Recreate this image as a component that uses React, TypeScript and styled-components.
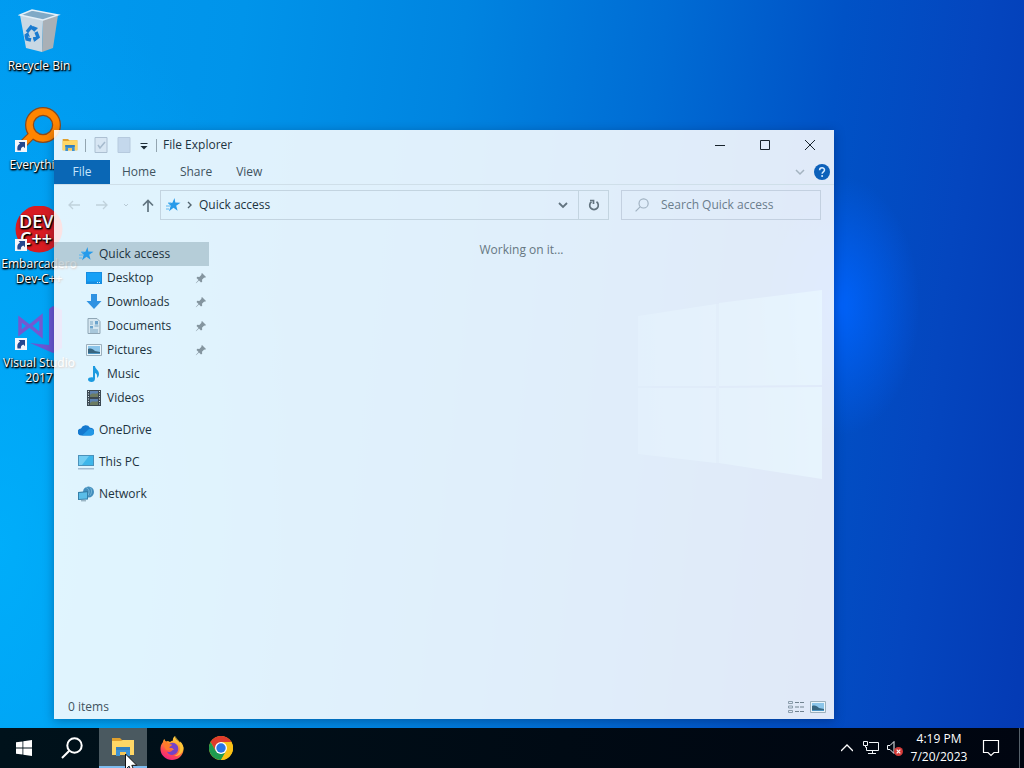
import React from "react";
import styled, { createGlobalStyle, css } from "styled-components";

const GlobalStyle = createGlobalStyle`
  *, *::before, *::after { box-sizing: border-box; }
  body {
    margin: 0;
    font-family: "Open Sans", "Noto Sans", sans-serif;
    font-size: 12px;
    line-height: 16px;
    color: #1d3340;
  }
  button, input { font: inherit; color: inherit; }
  button { border: 0; padding: 0; background: none; }
  svg { display: block; flex: none; }
  ul { list-style: none; margin: 0; padding: 0; }
`;

/* ---------- Desktop ---------- */

const Screen = styled.div`
  display: flex;
  flex-direction: column;
  min-height: 100vh;
  overflow: hidden;
`;

const Desktop = styled.main`
  position: relative;
  flex: 1;
  background:
    radial-gradient(ellipse 80px 130px at 82% 42%, rgba(0, 100, 255, 0.9), rgba(0, 100, 255, 0) 100%),
    radial-gradient(ellipse 30% 80% at 0% 75%, rgba(0, 182, 255, 0.7), rgba(0, 182, 255, 0) 100%),
    linear-gradient(97deg, #009af0 0%, #0094ea 22%, #0084e0 42%, #006cd4 60%, #0052c6 76%, #0446bf 88%, #043ab4 100%);
`;

const Wallpaper = styled.svg`
  position: absolute;
  inset: 0;
  width: 100%;
  height: 100%;
`;

const Shortcuts = styled.ul`
  position: relative;
  display: flex;
  flex-direction: column;
  width: 78px;
  padding-top: 8px;
`;

const Shortcut = styled.li`
  height: 99px;
`;

const ShortcutButton = styled.button`
  display: flex;
  flex-direction: column;
  align-items: center;
  gap: 2px;
  width: 100%;
  line-height: 15px;
  color: #fff;
  text-shadow: 0 1px 2px #000, 1px 1px 2px #000, 1px 1px 1px #000;
`;

/* ---------- Explorer window ---------- */

const Window = styled.section`
  position: absolute;
  inset: 130px 190px 9px 54px;
  display: flex;
  flex-direction: column;
  background: rgba(255, 255, 255, 0.88);
  box-shadow: 0 2px 10px rgba(0, 20, 60, 0.35);
`;

const TitleBar = styled.header`
  display: flex;
  align-items: center;
  height: 30px;
  padding: 0 2px 0 8px;
`;

const QuickTools = styled.div`
  display: flex;
  align-items: center;
  gap: 7px;
  margin-right: 6px;
`;

const ToolButton = styled.button`
  display: flex;
`;

const Divider = styled.span`
  width: 1px;
  height: 13px;
  background: #93a5b0;
`;

const WindowTitle = styled.h1`
  flex: 1;
  margin: 0;
  font-size: 12px;
  font-weight: 400;
`;

const CaptionButton = styled.button`
  display: flex;
  align-items: center;
  justify-content: center;
  width: 45px;
  height: 30px;
`;

const Ribbon = styled.nav`
  display: flex;
  align-items: center;
  height: 25px;
  padding-right: 4px;
  border-bottom: 1px solid #cfdfe9;
`;

const Tab = styled.button<{ $file?: boolean }>`
  height: 24px;
  padding: 0 12px;
  color: #40535f;
  ${(p) =>
    p.$file &&
    css`
      width: 56px;
      background: #0a67b5;
      color: #c5e4fa;
    `}
`;

const RibbonEnd = styled.div`
  display: flex;
  align-items: center;
  gap: 8px;
  margin-left: auto;
`;

const AddressRow = styled.div`
  display: flex;
  align-items: center;
  height: 39px;
  padding: 0 13px 0 12px;
`;

const History = styled.div`
  display: flex;
  align-items: center;
  gap: 12px;
  width: 94px;
`;

const AddressBox = styled.div`
  display: flex;
  flex: 1;
  align-items: stretch;
  height: 30px;
  border: 1px solid #c3d4e0;
`;

const Crumb = styled.button`
  display: flex;
  flex: 1;
  align-items: center;
  gap: 5px;
  padding-left: 4px;
`;

const BoxButton = styled.button<{ $divided?: boolean }>`
  display: flex;
  align-items: center;
  justify-content: center;
  width: 30px;
  border-left: ${(p) => (p.$divided ? "1px solid #c3d4e0" : "0")};
`;

const SearchBox = styled.label`
  display: flex;
  align-items: center;
  gap: 12px;
  width: 200px;
  height: 30px;
  margin-left: 12px;
  padding-left: 13px;
  border: 1px solid #c3d0e0;
`;

const SearchInput = styled.input`
  min-width: 0;
  width: 100%;
  padding: 0;
  border: 0;
  outline: 0;
  background: none;
  &::placeholder { color: #6b7d8c; opacity: 1; }
`;

const Body = styled.div`
  display: flex;
  flex: 1;
  padding-top: 18px;
`;

const Tree = styled.nav`
  width: 155px;
`;

const TreeGroup = styled.ul`
  margin-bottom: 8px;
`;

const TreeItem = styled.button<{ $nested?: boolean; $selected?: boolean }>`
  display: flex;
  align-items: center;
  gap: 5px;
  width: 100%;
  height: 24px;
  padding-left: ${(p) => (p.$nested ? 32 : 24)}px;
  background: ${(p) => (p.$selected ? "rgba(90, 125, 140, 0.32)" : "none")};
`;

const Pin = styled.span`
  margin-left: auto;
  padding-right: 2px;
`;

const Content = styled.p`
  flex: 1;
  margin: 0;
  text-align: center;
  color: #667782;
`;

const StatusBar = styled.footer`
  display: flex;
  align-items: center;
  height: 24px;
  padding: 0 8px 0 14px;
  color: #40535f;
`;

const ViewModes = styled.div`
  display: flex;
  align-items: center;
  gap: 6px;
  margin-left: auto;
`;

/* ---------- Taskbar ---------- */

const Taskbar = styled.footer`
  position: relative;
  display: flex;
  height: 40px;
  background: linear-gradient(90deg, #00121b, #000a14 55%, #000510);
  color: #fff;
`;

const TaskGroup = styled.div`
  display: flex;
  gap: 1px;
  margin-left: 3px;
  &:first-child { gap: 0; margin-left: 0; }
`;

const TaskButton = styled.button<{ $active?: boolean }>`
  position: relative;
  display: flex;
  align-items: center;
  justify-content: center;
  width: 48px;
  height: 40px;
  ${(p) =>
    p.$active &&
    css`
      background: #4a5960;
      border-bottom: 2px solid #7dbcf0;
    `}
`;

const Tray = styled.div`
  display: flex;
  align-items: center;
  margin-left: auto;
`;

const TrayButton = styled.button`
  display: flex;
  align-items: center;
  justify-content: center;
  width: 24px;
  height: 40px;
`;

const Clock = styled.button`
  width: 64px;
  height: 40px;
  line-height: 18px;
  text-align: center;
  white-space: nowrap;
`;

const NoticeButton = styled(TrayButton)`
  width: 40px;
`;

const ShowDesktop = styled.button`
  width: 5px;
  height: 40px;
  margin-left: 8px;
  border-left: 1px solid #56616a;
`;

const Pointer = styled.svg`
  position: absolute;
  left: 26px;
  top: 25px;
  z-index: 1;
`;

/* ---------- Drawings ---------- */

const LinkBadge = () => (
  <g>
    <rect x="0" y="33" width="12" height="12" fill="#f4f6fb" />
    <path d="M2.500 43.500c-.6-3.500 0-5.500 2.600-6.800L3.600 35H10v6.300l-1.700-1.700c-2 .8-2.600 1.900-2.400 4z" fill="#24478f" />
  </g>
);

const RecycleBin = () => (
  <svg width="48" height="48" viewBox="0 0 48 48">
    <path d="m5 7 23 5-1 32-16-4z" fill="#c8d8e4" />
    <path d="m28 12 15-5-5 33-11 4z" fill="#a9b0b6" />
    <path d="M5 7 17 2l26 5-15 5z" fill="#7fa9c6" />
    <path d="M5 7 17 2l26 5-15 5z" fill="none" stroke="#e3eff8" strokeWidth="1.400" />
    <g fill="none" stroke="#197bd0" strokeWidth="3.400">
      <path d="m12 24 4-5 4 3" />
      <path d="m21 24 2 5-4 3" />
      <path d="m16 32-4-1-1-4" />
    </g>
    <path d="m18 18 5 2-4 4zM24 29l-5 5-1-5zM9 27l4-3 2 5z" fill="#197bd0" />
  </svg>
);

const EverythingIcon = () => (
  <svg width="48" height="48" viewBox="0 0 48 48">
    <path d="M18 27 5 40" stroke="#8a4a1c" strokeWidth="8.500" />
    <circle cx="28" cy="18" r="13.500" fill="none" stroke="#8a4a1c" strokeWidth="9" />
    <path d="M19 26 5 40" stroke="#ff8500" strokeWidth="6.300" />
    <circle cx="28" cy="18" r="13.500" fill="none" stroke="#ff8500" strokeWidth="6.500" />
    <LinkBadge />
  </svg>
);

const DevCppIcon = () => (
  <svg width="48" height="48" viewBox="0 0 48 48">
    <circle cx="24" cy="23" r="23.500" fill="#d81c22" />
    <text fill="#fff" fontFamily="Open Sans, sans-serif" fontSize="18" fontWeight="600">
      <tspan x="4" y="22">DEV</tspan>
      <tspan x="5" y="39">C++</tspan>
    </text>
    <LinkBadge />
  </svg>
);

const VisualStudioIcon = () => (
  <svg width="48" height="48" viewBox="0 0 48 48">
    <path d="m34 4 4-3 9 4v38l-9 5-23-10 19 2z" fill="#6c55d2" />
    <path d="M5 14v14l9-7zM26 12v18l-11-9z" fill="none" stroke="#7458d0" strokeWidth="3.500" />
    <LinkBadge />
  </svg>
);

const Folder = ({ size }: { size: number }) => (
  <svg width={size} height={size} viewBox="0 0 24 24">
    <path d="M1 3h8l2 2h12v15H1z" fill="#e0a02e" />
    <path d="M1 6h9l2-1h11v15H1z" fill="#ffd766" />
    <path d="M5 21v-9h14v9h-4v-4H9v4z" fill="#3d92d4" />
    <path d="M5 12h14v3H5z" fill="#3580bd" />
    <path d="M9 17h6v3H9z" fill="#f4c658" />
  </svg>
);

const Star = () => (
  <svg width="16" height="16" viewBox="0 0 16 16">
    <path d="m9.500 1 .8 4.600 5.200.2-4.300 2.900 1.400 5-4.100-2.900-4.500 3.500 1.700-5.500L3 6l4.400-.3z" fill="#279bea" />
    <path d="M1 9h4M1 12h3M3 6h3" stroke="#5bb6f0" strokeWidth="1" />
  </svg>
);

const MonitorSmall = () => (
  <svg width="16" height="16" viewBox="0 0 16 16">
    <path d="M0 2h16v12H0z" fill="#168ce0" />
    <path d="M1 3h14v8.500H1z" fill="#16a0f6" />
    <path d="M11 12.500h1M13 12.500h1" stroke="#d8f1ff" />
  </svg>
);

const DownloadArrow = () => (
  <svg width="16" height="16" viewBox="0 0 16 16">
    <path d="M5 0h6v7h4.500L8 15 .5 7H5z" fill="#2f92e2" />
  </svg>
);

const DocumentIcon = () => (
  <svg width="16" height="16" viewBox="0 0 16 16">
    <path d="M2 .5h9l3 3v12H2z" fill="#d5e6f0" stroke="#8fa6b5" />
    <path d="M4 4h3M4 6h3M4 12h8M4 14h8M8.500 8h4" stroke="#7aa8c6" />
    <path d="M4 8h3v2.500H4zM9 3h3v3.500H9z" fill="#6ba3cc" />
  </svg>
);

const PictureIcon = () => (
  <svg width="16" height="16" viewBox="0 0 16 16">
    <path d="M.5 2.500h15v11H.5z" fill="#e9f5fb" stroke="#9cb0bd" />
    <path d="M2 4h12v8H2z" fill="#8bc5ea" />
    <path d="M2 7c3-1 5 0 7 2l5 1v2H2z" fill="#376580" />
    <path d="M2 11h12v1H2z" fill="#4b93c2" />
  </svg>
);

const MusicIcon = () => (
  <svg width="16" height="16" viewBox="0 0 16 16">
    <path d="M7 0h2c0 3 4 4 4 8 0 2-1 3-2 4 .6-3-.5-4.500-2-5v5.500C9 15 7.500 16 5.500 16 3.500 16 2 15 2 13.500S4 11 7 11.400z" fill="#1b9ae0" />
  </svg>
);

const VideoIcon = () => (
  <svg width="16" height="16" viewBox="0 0 16 16">
    <path d="M1 0h14v16H1z" fill="#3b4852" />
    <path d="M4 1h8v6H4zM4 9h8v6H4z" fill="#5d82b0" />
    <path d="M4 5c3-3 5 0 8-2v4H4zM4 13c3-3 5 0 8-2v4H4z" fill="#6d7c62" />
    <path d="M2.500 1v14M13.500 1v14" stroke="#d6e3eb" strokeDasharray="1 1.500" />
  </svg>
);

const CloudIcon = () => (
  <svg width="16" height="16" viewBox="0 0 16 16">
    <path d="M3.500 13.500a3.500 3.500 0 0 1-.5-7 5 5 0 0 1 9-.8 3.900 3.900 0 0 1 .5 7.800z" fill="#1479cf" />
    <path d="m4 13.500 7-6.500c3-1 5 1 5 3.300a3 3 0 0 1-3 3.200z" fill="#2398e6" />
  </svg>
);

const ComputerIcon = () => (
  <svg width="16" height="16" viewBox="0 0 16 16">
    <path d="M0 1h16v11H0z" fill="#4b91ba" />
    <path d="M1 2h14v9H1z" fill="#3fb6ea" />
    <path d="M1 2h10l-7 9H1z" fill="#73cdf3" />
    <path d="M0 14h16v1.500H0z" fill="#a4bcd2" />
  </svg>
);

const NetworkIcon = () => (
  <svg width="16" height="16" viewBox="0 0 16 16">
    <circle cx="10.500" cy="6" r="5.500" fill="#438ebd" />
    <path d="M8 1.500c3 1 4 4 2 8M12 1.500c2 2 2 5 0 8" stroke="#79b9da" fill="none" />
    <path d="m0 6 10-1v8.500L0 14z" fill="#357fa9" />
    <path d="m1 7 8-.8v6.400L1 13z" fill="#5bbde8" />
    <path d="M3 14.800h5" stroke="#7e9aab" />
  </svg>
);

const PinIcon = () => (
  <svg width="12" height="12" viewBox="0 0 12 12">
    <path d="m7 1 4 4-1 .7-.8-.2-2.200 2.200.2 2L6 10.500 4 8.500 1 11.200.8 11l2.700-3-2-2 .8-1.200 2 .2L6.500 2.800 6.300 2z" fill="#84959f" />
  </svg>
);

type GlyphProps = { d: string; color: string; width?: number };
const Glyph = ({ d, color, width = 1.5 }: GlyphProps) => (
  <svg width="12" height="12" viewBox="0 0 12 12">
    <path d={d} fill="none" stroke={color} strokeWidth={width} />
  </svg>
);

const WindowsMark = () => (
  <svg width="16" height="16" viewBox="0 0 16 16" fill="#fff">
    <path d="m0 2.300 6.500-.9v6.200H0zM7.300 1.300 16 0v7.600H7.300zM0 8.400h6.500v6.200L0 13.700zM7.300 8.400H16V16l-8.700-1.300z" />
  </svg>
);

const FirefoxIcon = () => (
  <svg width="24" height="24" viewBox="0 0 24 24">
    <defs>
      <linearGradient id="fox" x1=".8" y1="0" x2=".3" y2="1">
        <stop offset="0" stopColor="#ffe14a" />
        <stop offset=".4" stopColor="#ff9a2a" />
        <stop offset=".75" stopColor="#ff4456" />
        <stop offset="1" stopColor="#ee2086" />
      </linearGradient>
    </defs>
    <path d="M3 6c.1-1.500.7-2.500 1.500-3 .2 1.200.7 1.900 1.500 2.400L8 5l2 1c1-1 2-1.500 3-1.500C12.500 3 13.500 1 15 0c0 2.500 2 3.500 3.500 5l1.500 2 .3-1.500C22.500 7.500 24 10.500 23.500 14 22.800 20 18 24 12 24S1 19.500.5 14C.2 10.800 1.200 8 3 6z" fill="url(#fox)" />
    <path d="M7 10c2-3 6-4.500 9-2 3 2 3 7 0 9.500s-8 1.500-9-2c2 1 4 .5 5-1l2-1-2-1.500H9.500z" fill="#7542c8" />
    <path d="M3 6c2-1 5 0 6 2l3 .5c0 1.500-2 1.800-2.500 2.500-.2 1 .5 1.500 1.500 2-2 2-5 1.500-6-.5z" fill="#ff7b2a" />
    <path d="M15 0c0 3 5 4 5 10 1 5-2 9-6 10 5 .5 9-3 9.500-8-1-4-5-7-8.500-12z" fill="#ffcf3a" opacity=".8" />
  </svg>
);

const ChromeIcon = () => (
  <svg width="24" height="24" viewBox="0 0 24 24">
    <circle cx="12" cy="12" r="12" fill="#fbc116" />
    <path d="M1.600 6A12 12 0 0 1 22.400 6H12l-5.200 9z" fill="#df3b2c" />
    <path d="M1.600 6 6.800 15 12 18l-1 6A12 12 0 0 1 1.600 6z" fill="#1f9b50" />
    <path d="M12 24 17.200 15 12 18l-5.200-3L11 24z" fill="#1f9b50" />
    <path d="M12 24 17.200 15A6 6 0 0 0 17.200 9L12 6h10.400A12 12 0 0 1 12 24z" fill="#fbc116" />
    <circle cx="12" cy="12" r="6" fill="#fff" />
    <circle cx="12" cy="12" r="4.700" fill="#2b75e6" />
  </svg>
);

const SearchIcon = ({ size, color, width }: { size: number; color: string; width: number }) => (
  <svg width={size} height={size} viewBox="0 0 22 22" fill="none" stroke={color} strokeWidth={width}>
    <circle cx="13.500" cy="8.500" r="7.200" />
    <path d="M8.300 13.700 1 21" />
  </svg>
);

const shortcuts = [
  { label: "Recycle Bin", icon: <RecycleBin /> },
  { label: "Everything", icon: <EverythingIcon /> },
  { label: "Embarcadero Dev-C++", icon: <DevCppIcon /> },
  { label: "Visual Studio 2017", icon: <VisualStudioIcon /> },
];

const pinned = [
  { label: "Desktop", icon: <MonitorSmall />, pin: true },
  { label: "Downloads", icon: <DownloadArrow />, pin: true },
  { label: "Documents", icon: <DocumentIcon />, pin: true },
  { label: "Pictures", icon: <PictureIcon />, pin: true },
  { label: "Music", icon: <MusicIcon />, pin: false },
  { label: "Videos", icon: <VideoIcon />, pin: false },
];

const places = [
  { label: "OneDrive", icon: <CloudIcon /> },
  { label: "This PC", icon: <ComputerIcon /> },
  { label: "Network", icon: <NetworkIcon /> },
];

export default function App() {
  return (
    <Screen>
      <GlobalStyle />
      <Desktop>
        <Wallpaper viewBox="0 0 1024 728" preserveAspectRatio="xMidYMid slice" aria-hidden="true">
          <defs>
            <linearGradient id="pane" gradientUnits="userSpaceOnUse" x1="630" y1="0" x2="822" y2="0">
              <stop offset="0" stopColor="#5cc4ff" stopOpacity=".3" />
              <stop offset="1" stopColor="#5cd0ff" stopOpacity=".65" />
            </linearGradient>
          </defs>
          <path
            d="m638 316 78-12v82h-78zM719 303l103-13v95l-103 1zM638 388h78v75l-78-9zM719 388l103-1v92l-103-16z"
            fill="url(#pane)"
          />
          <path d="M716 304h3v159h-3z" fill="#5cc4ff" fillOpacity=".2" />
        </Wallpaper>

        <Shortcuts>
          {shortcuts.map((s) => (
            <Shortcut key={s.label}>
              <ShortcutButton>
                {s.icon}
                <span>{s.label}</span>
              </ShortcutButton>
            </Shortcut>
          ))}
        </Shortcuts>

        <Window aria-label="File Explorer">
          <TitleBar>
            <QuickTools>
              <Folder size={16} />
              <Divider />
              <ToolButton aria-label="Properties">
                <svg width="16" height="16" viewBox="0 0 16 16">
                  <path d="M2 .5h12v15H2z" fill="#d7e6f3" stroke="#adc0d2" />
                  <path d="m5 8 2 3 5-6" fill="none" stroke="#a5bacd" strokeWidth="1.500" />
                </svg>
              </ToolButton>
              <ToolButton aria-label="New folder">
                <svg width="16" height="16" viewBox="0 0 16 16">
                  <path d="M2 .5h12v15H2z" fill="#c4d8ec" stroke="#b6cade" />
                </svg>
              </ToolButton>
              <ToolButton aria-label="Customize toolbar">
                <svg width="10" height="12" viewBox="0 0 10 12">
                  <path d="M1.500 4.500h7" stroke="#1d2c36" />
                  <path d="M1.500 7h7L5 10.500z" fill="#1d2c36" />
                </svg>
              </ToolButton>
              <Divider />
            </QuickTools>
            <WindowTitle>File Explorer</WindowTitle>
            <CaptionButton aria-label="Minimize">
              <Glyph d="M1 6.500h10" color="#17232c" width={1} />
            </CaptionButton>
            <CaptionButton aria-label="Maximize">
              <Glyph d="M1.500 1.500h9v9h-9z" color="#17232c" width={1} />
            </CaptionButton>
            <CaptionButton aria-label="Close">
              <Glyph d="m1 1 10 10M11 1 1 11" color="#17232c" width={1} />
            </CaptionButton>
          </TitleBar>

          <Ribbon>
            <Tab $file>File</Tab>
            <Tab>Home</Tab>
            <Tab>Share</Tab>
            <Tab>View</Tab>
            <RibbonEnd>
              <ToolButton aria-label="Expand ribbon">
                <Glyph d="m2 4 4 4 4-4" color="#a4b3c0" />
              </ToolButton>
              <ToolButton aria-label="Help">
                <svg width="16" height="16" viewBox="0 0 16 16">
                  <circle cx="8" cy="8" r="8" fill="#0d61ba" />
                  <path d="M5.600 6.300C5.600 3 10.500 3 10.500 6c0 1.800-2.400 1.800-2.400 3.800" fill="none" stroke="#d8ecff" strokeWidth="1.500" />
                  <circle cx="8.100" cy="12" r="1" fill="#d8ecff" />
                </svg>
              </ToolButton>
            </RibbonEnd>
          </Ribbon>

          <AddressRow>
            <History>
              <ToolButton aria-label="Back">
                <svg width="16" height="16" viewBox="0 0 16 16" fill="none" stroke="#c0d2dc" strokeWidth="1.300">
                  <path d="M14 8H3M7 4 3 8l4 4" />
                </svg>
              </ToolButton>
              <ToolButton aria-label="Forward">
                <svg width="16" height="16" viewBox="0 0 16 16" fill="none" stroke="#c0d2dc" strokeWidth="1.300">
                  <path d="M2 8h11M9 4l4 4-4 4" />
                </svg>
              </ToolButton>
              <ToolButton aria-label="Recent locations">
                <svg width="8" height="8" viewBox="0 0 8 8">
                  <path d="m2 3 2 2 2-2" fill="none" stroke="#b8cad5" />
                </svg>
              </ToolButton>
              <ToolButton aria-label="Up">
                <svg width="12" height="16" viewBox="0 0 12 16" fill="none" stroke="#60737f" strokeWidth="1.700">
                  <path d="M6 15V4M1 8.500l5-5 5 5" />
                </svg>
              </ToolButton>
            </History>
            <AddressBox>
              <Crumb>
                <Star />
                <svg width="8" height="10" viewBox="0 0 8 10">
                  <path d="m2 2 3 3-3 3" fill="none" stroke="#51636e" strokeWidth="1.400" />
                </svg>
                <span>Quick access</span>
              </Crumb>
              <BoxButton aria-label="Previous locations">
                <Glyph d="m2 4 4 4 4-4" color="#62737f" width={1.8} />
              </BoxButton>
              <BoxButton $divided aria-label="Refresh">
                <svg width="12" height="12" viewBox="0 0 12 12" fill="none" stroke="#62737f" strokeWidth="1.700">
                  <path d="M8.500 2.800A4.300 4.300 0 1 1 3.500 2.800" />
                  <path d="M2 1.500h3.500V5" />
                </svg>
              </BoxButton>
            </AddressBox>
            <SearchBox>
              <SearchIcon size={14} color="#9fb0c0" width={1.8} />
              <SearchInput aria-label="Search Quick access" placeholder="Search Quick access" />
            </SearchBox>
          </AddressRow>

          <Body>
            <Tree aria-label="Folders">
              <TreeGroup>
                <li>
                  <TreeItem $selected>
                    <Star />
                    Quick access
                  </TreeItem>
                </li>
                {pinned.map((item) => (
                  <li key={item.label}>
                    <TreeItem $nested>
                      {item.icon}
                      {item.label}
                      {item.pin && (
                        <Pin>
                          <PinIcon />
                        </Pin>
                      )}
                    </TreeItem>
                  </li>
                ))}
              </TreeGroup>
              {places.map((item) => (
                <TreeGroup key={item.label}>
                  <li>
                    <TreeItem>
                      {item.icon}
                      {item.label}
                    </TreeItem>
                  </li>
                </TreeGroup>
              ))}
            </Tree>
            <Content>Working on it...</Content>
          </Body>

          <StatusBar>
            <span>0 items</span>
            <ViewModes>
              <ToolButton aria-label="Details view">
                <svg width="16" height="14" viewBox="0 0 16 14">
                  <path d="M.5 1.500h4v2h-4zM.5 6h4v2h-4zM.5 10.500h4v2h-4z" fill="none" stroke="#8b9dac" />
                  <path d="M7 2.500h9M7 7h9M7 11.500h9" stroke="#70828f" strokeDasharray="4 1" />
                </svg>
              </ToolButton>
              <ToolButton aria-label="Thumbnail view">
                <PictureIcon />
              </ToolButton>
            </ViewModes>
          </StatusBar>
        </Window>
      </Desktop>

      <Taskbar>
        <TaskGroup>
          <TaskButton aria-label="Start">
            <WindowsMark />
          </TaskButton>
          <TaskButton aria-label="Search">
            <SearchIcon size={22} color="#fff" width={2} />
          </TaskButton>
        </TaskGroup>
        <TaskGroup>
          <TaskButton $active aria-label="File Explorer">
            <Folder size={24} />
            <Pointer width="13" height="20" viewBox="0 0 13 20" aria-hidden="true">
              <path d="M.5 1v15.500l3.600-3.400L6.500 19l2.700-1.200-2.400-5.500h5z" fill="#fff" stroke="#111" />
            </Pointer>
          </TaskButton>
          <TaskButton aria-label="Firefox">
            <FirefoxIcon />
          </TaskButton>
          <TaskButton aria-label="Chrome">
            <ChromeIcon />
          </TaskButton>
        </TaskGroup>
        <Tray>
          <TrayButton aria-label="Show hidden icons">
            <Glyph d="m0 9 6-6 6 6" color="#fff" width={1.3} />
          </TrayButton>
          <TrayButton aria-label="Network">
            <svg width="16" height="16" viewBox="0 0 16 16" fill="none" stroke="#f1f5f8">
              <path d="M6 2.500h9.500v8H3.500V7M9.500 10.500v3M5 13.500h8M.5 1.500h4v4h-4zM2.500 5.500v2" />
            </svg>
          </TrayButton>
          <TrayButton aria-label="Volume muted">
            <svg width="16" height="16" viewBox="0 0 16 16">
              <path d="M.5 5.500H3l4-4v12l-4-4H.5z" fill="none" stroke="#f1f5f8" />
              <circle cx="11.500" cy="11.500" r="4.500" fill="#d33a38" />
              <path d="m9.700 9.700 3.600 3.600M13.300 9.700l-3.600 3.600" stroke="#fff" strokeWidth="1.200" />
            </svg>
          </TrayButton>
          <Clock>
            4:19 PM
            <br />
            7/20/2023
          </Clock>
          <NoticeButton aria-label="Notifications">
            <svg width="18" height="18" viewBox="0 0 18 18">
              <path d="M1.500 1.500h15v12h-4.500L9 16.500l-3-3H1.500z" fill="none" stroke="#fff" strokeWidth="1.200" />
            </svg>
          </NoticeButton>
          <ShowDesktop aria-label="Show desktop" />
        </Tray>
      </Taskbar>
    </Screen>
  );
}
